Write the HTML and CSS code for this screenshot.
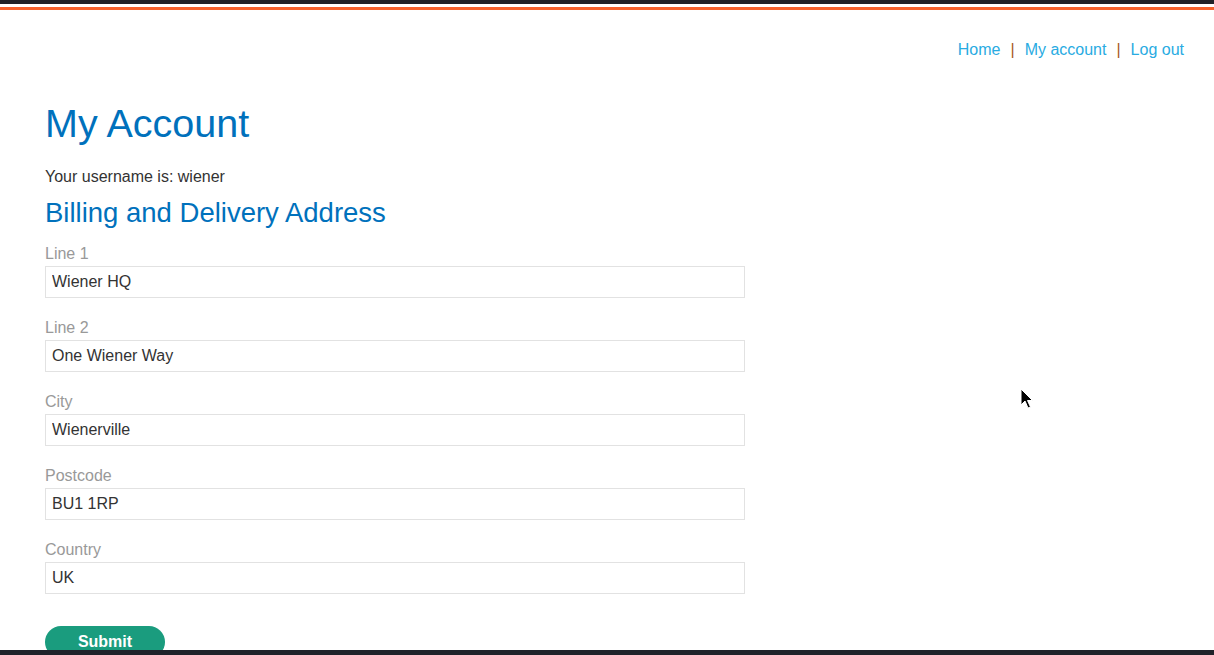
FILE: index.html
```html
<!DOCTYPE html>
<html lang="en">
<head>
<meta charset="utf-8">
<title>My Account</title>
<link rel="stylesheet" href="styles.css">
</head>
<body>
<div class="topbar"><div class="dark"></div><div class="orange"></div></div>
<nav class="nav">
  <a href="#">Home</a><span class="sep">|</span><a href="#">My account</a><span class="sep">|</span><a href="#">Log out</a>
</nav>
<main class="main">
  <h1 class="title">My Account</h1>
  <p class="username">Your username is: wiener</p>
  <h2 class="subtitle">Billing and Delivery Address</h2>
  <form class="form">
    <div class="field"><label class="label">Line 1</label><input class="input" value="Wiener HQ"></div>
    <div class="field"><label class="label">Line 2</label><input class="input" value="One Wiener Way"></div>
    <div class="field"><label class="label">City</label><input class="input" value="Wienerville"></div>
    <div class="field"><label class="label">Postcode</label><input class="input" value="BU1 1RP"></div>
    <div class="field"><label class="label">Country</label><input class="input" value="UK"></div>
    <button class="submit" type="button">Submit</button>
  </form>
</main>
<svg class="cursor" width="14" height="22" viewBox="0 0 14 22"><path d="M1 1 L1 17 L5 13 L8 20 L10.5 19 L7.5 12.5 L12.5 12.5 Z" fill="#000" stroke="#fff" stroke-width="1"/></svg>
<div class="bottombar"></div>
</body>
</html>
```
FILE: styles.css
```css
html, body {
  margin: 0;
  padding: 0;
  background: #fff;
  font-family: "Liberation Sans", Arial, sans-serif;
  color: #333;
  font-size: 16px;
}
.topbar .dark {
  height: 4px;
  background: #1f2229;
  border-bottom: 3px solid #fff;
}
.topbar .orange {
  height: 3px;
  background: #f5622e;
}
.nav {
  display: flex;
  justify-content: flex-end;
  align-items: center;
  padding: 30px 30px 0 0;
  height: 20px;
  line-height: 20px;
}
.nav a {
  color: #29abe2;
  text-decoration: none;
}
.sep {
  color: #a8581a;
  margin: 0 10px;
}
.main {
  padding: 0 45px;
}
.title {
  font-size: 39.5px;
  font-weight: normal;
  color: #0071bc;
  margin: 40px 0 0;
  line-height: 46px;
}
.username {
  margin: 22px 0 0;
  line-height: 18px;
}
.subtitle {
  font-size: 27.5px;
  font-weight: normal;
  color: #0071bc;
  margin: 11px 0 0;
  line-height: 32px;
}
.form {
  margin-top: 16px;
}
.field {
  display: flex;
  flex-direction: column;
  margin-bottom: 21px;
}
.label {
  color: #999;
  line-height: 18px;
  margin-bottom: 3px;
}
.input {
  width: 700px;
  height: 32px;
  box-sizing: border-box;
  border: 1px solid #e2e2e2;
  padding: 0 6px;
  font-family: "Liberation Sans", Arial, sans-serif;
  font-size: 16px;
  color: #333;
  outline: none;
}
.submit {
  margin-top: 11px;
  width: 120px;
  height: 32px;
  border: none;
  border-radius: 16px;
  background: #1a9c7e;
  color: #fff;
  font-weight: bold;
  font-size: 16px;
  font-family: "Liberation Sans", Arial, sans-serif;
}
.cursor {
  position: absolute;
  left: 1020px;
  top: 388px;
}
.bottombar {
  position: fixed;
  left: 0;
  right: 0;
  bottom: 0;
  height: 5px;
  background: #1f2229;
}
```
